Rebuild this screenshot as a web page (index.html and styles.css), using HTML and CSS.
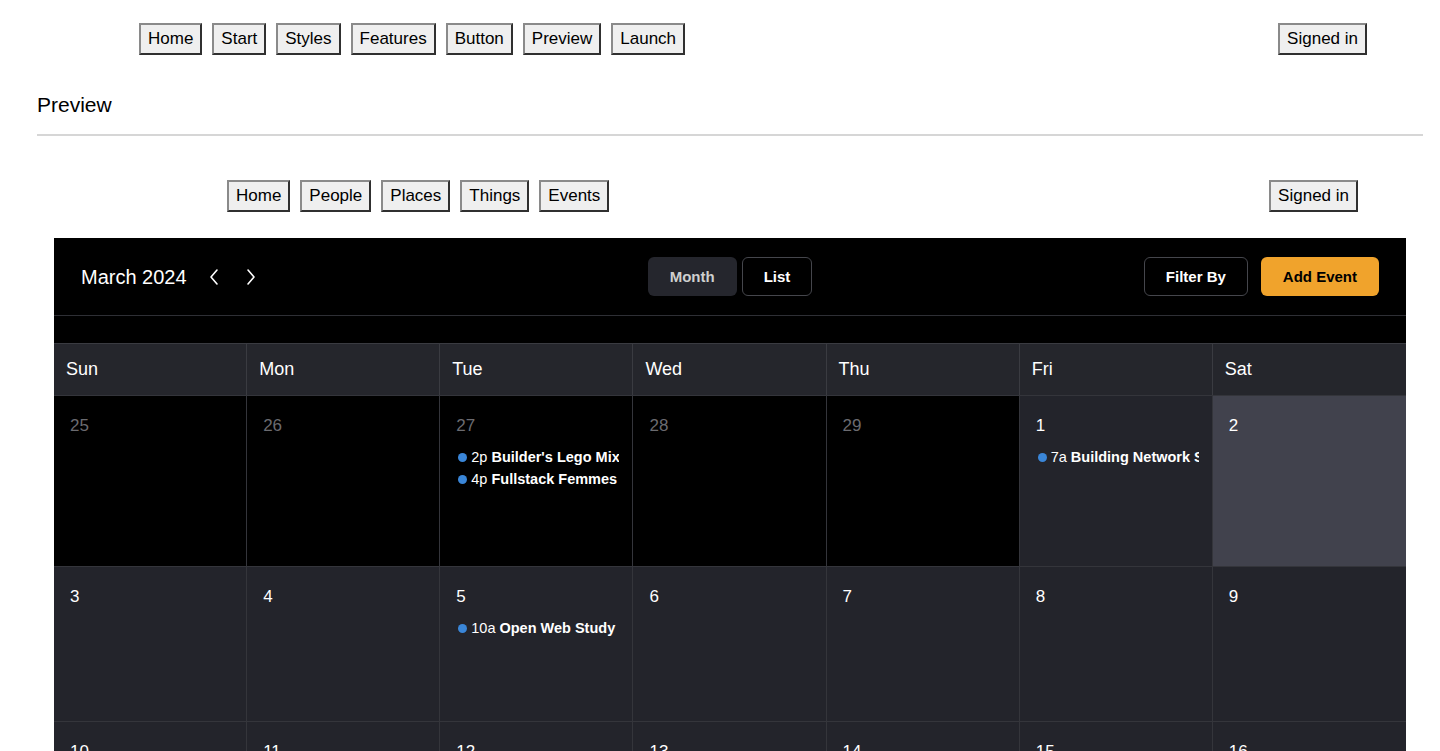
FILE: index.html
```html
<!DOCTYPE html>
<html lang="en">
<head>
<meta charset="utf-8">
<title>Preview</title>
<link rel="stylesheet" href="styles.css">
</head>
<body>
<nav class="topnav">
  <button class="nb">Home</button>
  <button class="nb">Start</button>
  <button class="nb">Styles</button>
  <button class="nb">Features</button>
  <button class="nb">Button</button>
  <button class="nb">Preview</button>
  <button class="nb">Launch</button>
  <button class="nb push">Signed in</button>
</nav>
<section class="preview">
  <h2 class="ptitle">Preview</h2>
  <hr class="rule">
  <div class="inner">
    <nav class="subnav">
      <button class="nb">Home</button>
      <button class="nb">People</button>
      <button class="nb">Places</button>
      <button class="nb">Things</button>
      <button class="nb">Events</button>
      <button class="nb push">Signed in</button>
    </nav>
    <div class="cal">
      <div class="cal-head">
        <div class="cal-left">
          <span class="month">March 2024</span>
          <svg class="chev" width="12" height="18" viewBox="0 0 12 18"><path d="M9 2 L3 9 L9 16" fill="none" stroke="#fff" stroke-width="1.6" stroke-linecap="round" stroke-linejoin="round"/></svg>
          <svg class="chev" width="12" height="18" viewBox="0 0 12 18"><path d="M3 2 L9 9 L3 16" fill="none" stroke="#fff" stroke-width="1.6" stroke-linecap="round" stroke-linejoin="round"/></svg>
        </div>
        <div class="cal-mid">
          <button class="cb cb-active">Month</button>
          <button class="cb cb-out">List</button>
        </div>
        <div class="cal-right">
          <button class="cb cb-out">Filter By</button>
          <button class="cb cb-add">Add Event</button>
        </div>
      </div>
      <div class="band"></div>
      <div class="grid">
        <div class="wd">Sun</div><div class="wd">Mon</div><div class="wd">Tue</div><div class="wd">Wed</div><div class="wd">Thu</div><div class="wd">Fri</div><div class="wd">Sat</div>

        <div class="day other r1"><div class="num">25</div></div>
        <div class="day other r1"><div class="num">26</div></div>
        <div class="day other r1"><div class="num">27</div>
          <div class="ev"><span class="dot"></span><span class="t">2p</span><b>Builder's Lego Mix</b></div>
          <div class="ev"><span class="dot"></span><span class="t">4p</span><b>Fullstack Femmes</b></div>
        </div>
        <div class="day other r1"><div class="num">28</div></div>
        <div class="day other r1"><div class="num">29</div></div>
        <div class="day r1"><div class="num">1</div>
          <div class="ev"><span class="dot"></span><span class="t">7a</span><b>Building Network Skills</b></div>
        </div>
        <div class="day today r1"><div class="num">2</div></div>

        <div class="day r2"><div class="num">3</div></div>
        <div class="day r2"><div class="num">4</div></div>
        <div class="day r2"><div class="num">5</div>
          <div class="ev"><span class="dot"></span><span class="t">10a</span><b>Open Web Study</b></div>
        </div>
        <div class="day r2"><div class="num">6</div></div>
        <div class="day r2"><div class="num">7</div></div>
        <div class="day r2"><div class="num">8</div></div>
        <div class="day r2"><div class="num">9</div></div>

        <div class="day r2"><div class="num">10</div></div>
        <div class="day r2"><div class="num">11</div></div>
        <div class="day r2"><div class="num">12</div></div>
        <div class="day r2"><div class="num">13</div></div>
        <div class="day r2"><div class="num">14</div></div>
        <div class="day r2"><div class="num">15</div></div>
        <div class="day r2"><div class="num">16</div></div>
      </div>
    </div>
  </div>
</section>
</body>
</html>
```
FILE: styles.css
```css
html, body {
  margin: 0;
  padding: 0;
  background: #fff;
  font-family: "Liberation Sans", Arial, sans-serif;
  color: #000;
}

.nb {
  font-family: "Liberation Sans", Arial, sans-serif;
  font-size: 17px;
  line-height: 20px;
  height: 32px;
  padding: 0 7px;
  background: #efefef;
  color: #000;
  border: 2px solid;
  border-color: #8a8a8a #303030 #303030 #8a8a8a;
  border-radius: 0;
  margin: 0;
  box-sizing: border-box;
}

.push { margin-left: auto; }

.topnav {
  display: flex;
  gap: 10px;
  padding: 23px 73px 0 139px;
}

.preview {
  margin: 0 17px 0 37px;
}

.ptitle {
  margin: 38px 0 0;
  font-size: 21px;
  font-weight: 400;
  line-height: 24px;
}

.rule {
  margin: 17px 0 0;
  border: 0;
  border-top: 2px solid #d6d6d6;
  height: 0;
}

.inner {
  padding: 0 17px;
}

.subnav {
  display: flex;
  gap: 10px;
  margin-top: 44px;
  padding: 0 48px 0 173px;
}

.cal {
  margin-top: 26px;
  background: #000;
  color: #fff;
  height: 600px;
}

.cal-head {
  display: grid;
  grid-template-columns: 1fr auto 1fr;
  align-items: center;
  height: 77px;
  padding: 0 27px;
  border-bottom: 1px solid #2e2f35;
}

.cal-left {
  display: flex;
  align-items: center;
}

.month {
  font-size: 20px;
  line-height: 24px;
  margin-right: 21px;
}

.chev { display: block; margin-right: 25px; }

.cal-mid {
  display: flex;
  gap: 5px;
}

.cal-right {
  display: flex;
  justify-content: flex-end;
  gap: 13px;
}

.cb {
  font-family: "Liberation Sans", Arial, sans-serif;
  font-size: 15px;
  font-weight: 700;
  height: 39px;
  padding: 0 21px;
  border-radius: 6px;
  border: 1px solid transparent;
  color: #fff;
  background: #000;
  margin: 0;
}

.cb-active {
  background: #25262d;
  color: #cfcfcf;
}

.cb-out {
  border-color: #45464c;
}

.cb-add {
  background: #f0a32c;
  color: #000;
}

.band {
  height: 27px;
  background: #000;
}

.grid {
  display: grid;
  grid-template-columns: repeat(7, 1fr);
}

.wd {
  height: 51px;
  display: flex;
  align-items: center;
  padding-left: 12px;
  font-size: 18px;
  background: #25262c;
  border-top: 1px solid #3a3b41;
  border-right: 1px solid #3a3b41;
}

.wd:nth-child(7) { border-right: 0; }

.day {
  background: #23242b;
  border-top: 1px solid #34353b;
  border-right: 1px solid #34353b;
  padding: 19px 13px 0 16px;
  overflow: hidden;
  min-width: 0;
}

.day:nth-child(7n) { border-right: 0; }

.r1 { height: 151px; }
.r2 { height: 135px; }

.other { background: #000; }
.other .num { color: #6b6b70; }
.today { background: #41424d; }

.num {
  font-size: 17px;
  line-height: 22px;
  height: 22px;
  margin-bottom: 9px;
}

.ev {
  font-size: 14.5px;
  line-height: 22px;
  white-space: nowrap;
  overflow: hidden;
  display: flex;
  align-items: center;
  padding-left: 2px;
}

.dot {
  width: 9px;
  height: 9px;
  border-radius: 50%;
  background: #3a86d8;
  flex: none;
  margin-right: 4px;
}

.t { margin-right: 4px; }

.ev b { font-weight: 700; flex: none; }
```
